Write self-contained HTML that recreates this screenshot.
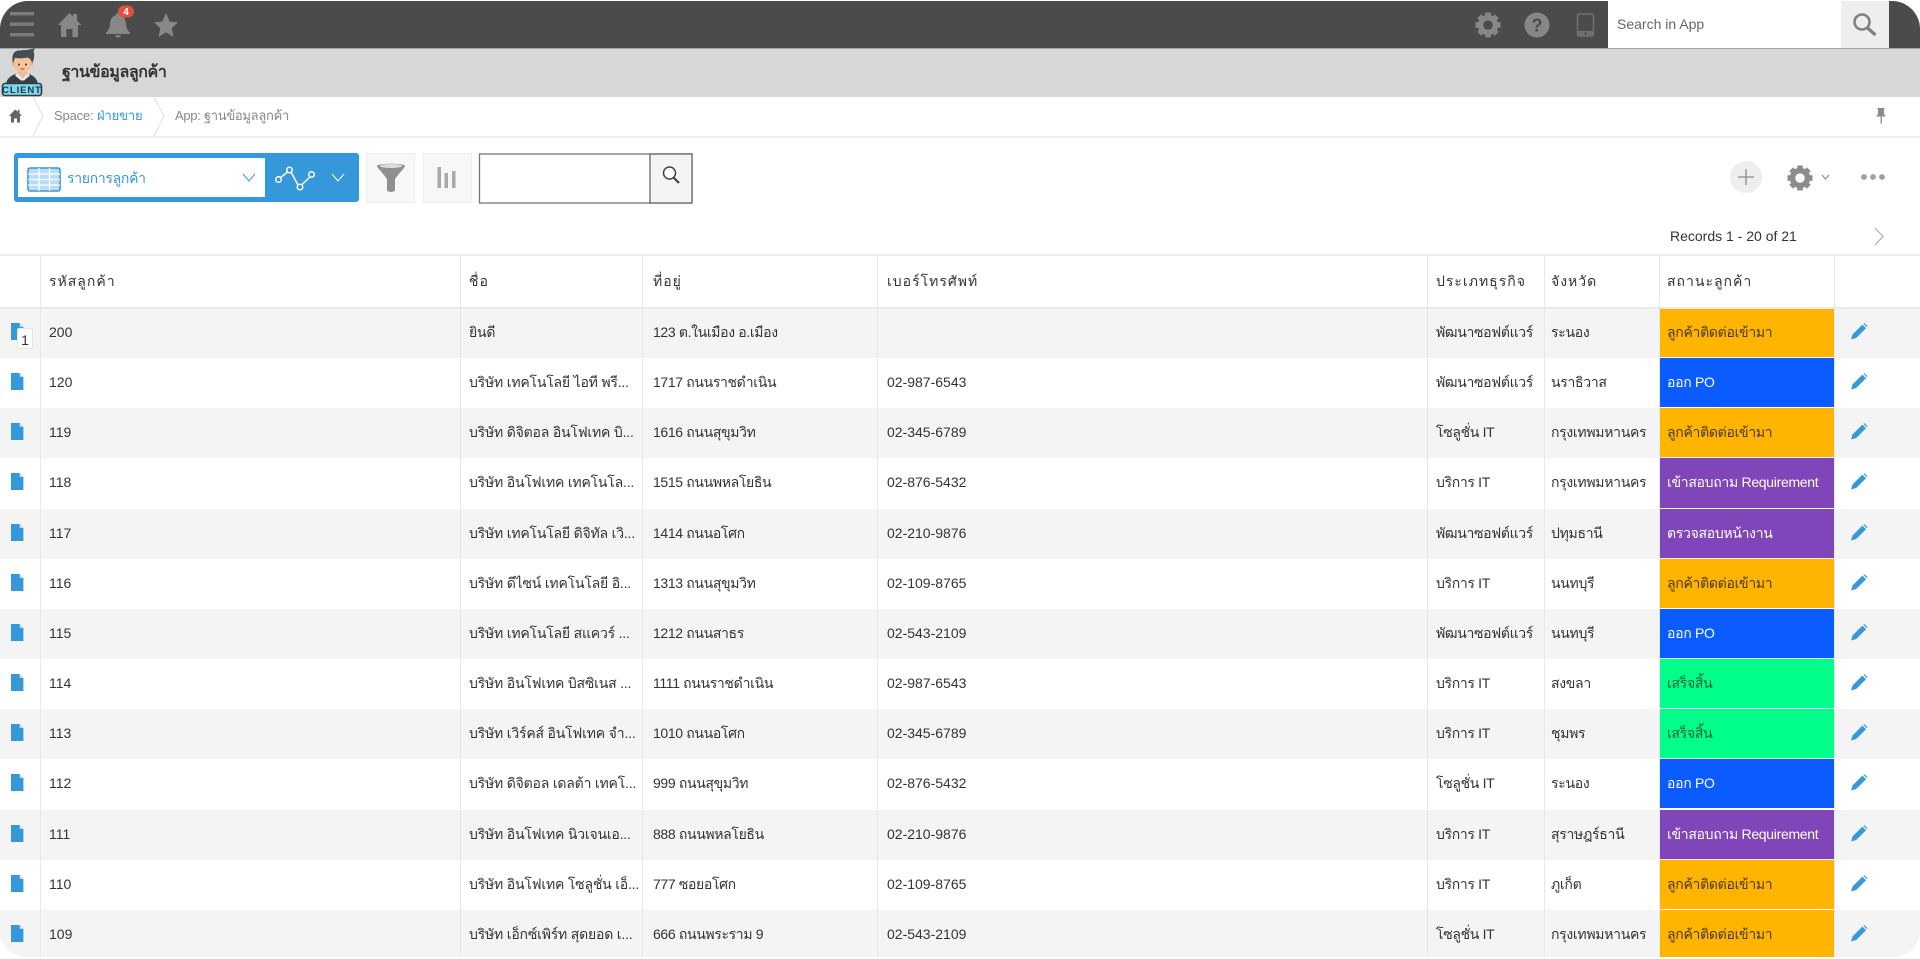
<!DOCTYPE html>
<html lang="th"><head><meta charset="utf-8"><title>ฐานข้อมูลลูกค้า</title>
<style>
*{box-sizing:border-box}
html,body{margin:0;padding:0;background:#fff}
body{width:1920px;height:959px;overflow:hidden;position:relative;font-family:"Liberation Sans","Noto Sans CJK SC",sans-serif;color:#333;font-size:14px}
.abs{position:absolute}
#frame{position:absolute;left:0;top:1px;width:1920px;height:956px;border-radius:28px 28px 26px 26px;overflow:hidden;background:#fff}
#bar{position:absolute;left:0;top:0;width:1920px;height:47px;background:#4b4b4b}
#band{position:absolute;left:0;top:47px;width:1920px;height:49px;background:#d5d7d8;border-top:1px solid #a5a7a7}
#crumb{position:absolute;left:0;top:96px;width:1920px;height:41px;background:#fff;border-bottom:2px solid #eff0f0}
.t{position:absolute;white-space:nowrap}
.vl{position:absolute;top:253px;bottom:0;width:1px;background:#e6e9e9;z-index:2}
.ln{position:absolute;left:0;width:1920px;height:2px;background:#e9ecec;z-index:2}
.h{position:absolute;top:269px;font-size:14px;letter-spacing:1px;color:#333;line-height:22px;white-space:nowrap;z-index:2}
.r{position:absolute;left:0;width:1920px;height:50.15px}
.g{background:#f4f4f4}
.r span{position:absolute;top:13px;line-height:22px;white-space:nowrap;color:#333}
.a{left:49px}.b{left:469px;letter-spacing:-.2px}.c{left:653px;letter-spacing:-.35px}.d{left:887px}.e{left:1436px;letter-spacing:-.33px}.f{left:1551px;letter-spacing:-.3px}
.r i{position:absolute;left:1659px;width:175px;top:0;bottom:1px;font-style:normal;line-height:48px;padding-left:8px;font-size:14px;white-space:nowrap;letter-spacing:-.3px}
.o{background:#ffb400;color:#4a3a10}.bl{background:#0a5cff;color:#fff}.p{background:#8045b9;color:#fff}.n{background:#00ff8a;color:#17603f}
.r svg{position:absolute}
.doc{left:11px;top:15px}.pen{left:1851px;top:15px}
</style></head><body>
<svg width="0" height="0" style="position:absolute"><defs>
<g id="docI"><path d="M0 0H8.5L12.4 4V17H0Z" fill="#3498db"/><path d="M8.7 .4V3.9H12.2Z" fill="#cfe5f5"/></g>
<g id="penI"><path d="M0 16.500L1.600 11.400L11.400 1.600L15 5.200L5.200 15Z" fill="#3498db"/><path d="M12.400 .8L13.200 0L16.500 3.300L15.800 4.100Z" fill="#3498db"/></g>
</defs></svg>
<div id="frame">
<div id="bar"></div>
<div id="band"></div>
<div id="crumb"></div>
<div class="abs" style="left:1608px;top:0;width:233px;height:47px;background:#fff"></div>
<div class="abs" style="left:1841px;top:0;width:48px;height:47px;background:#eee"></div>
<div id="table" class="abs" style="left:0;top:0;width:1920px;height:956px">
<div class="ln" style="top:252.500px"></div>
<div class="ln" style="top:306px"></div>
<div class="r g" style="top:307px"><svg class="doc" width="13" height="17"><use href="#docI"/></svg><span class="a">200</span><span class="b">ยินดี</span><span class="c">123 ต.ในเมือง อ.เมือง</span><span class="d"></span><span class="e">พัฒนาซอฟต์แวร์</span><span class="f">ระนอง</span><i class="o">ลูกค้าติดต่อเข้ามา</i><svg class="pen" width="17" height="17"><use href="#penI"/></svg>
<b style="position:absolute;left:17px;top:20px;width:16px;height:21px;background:#fff;border:1px solid #e5e5e5;border-radius:2px;font-weight:400;font-size:14px;line-height:22px;text-align:center;color:#333">1</b></div>
<div class="r" style="top:357.15px"><svg class="doc" width="13" height="17"><use href="#docI"/></svg><span class="a">120</span><span class="b">บริษัท เทคโนโลยี ไอที พรี...</span><span class="c">1717 ถนนราชดำเนิน</span><span class="d">02-987-6543</span><span class="e">พัฒนาซอฟต์แวร์</span><span class="f">นราธิวาส</span><i class="bl">ออก PO</i><svg class="pen" width="17" height="17"><use href="#penI"/></svg></div>
<div class="r g" style="top:407.3px"><svg class="doc" width="13" height="17"><use href="#docI"/></svg><span class="a">119</span><span class="b">บริษัท ดิจิตอล อินโฟเทค บิ...</span><span class="c">1616 ถนนสุขุมวิท</span><span class="d">02-345-6789</span><span class="e">โซลูชั่น IT</span><span class="f">กรุงเทพมหานคร</span><i class="o">ลูกค้าติดต่อเข้ามา</i><svg class="pen" width="17" height="17"><use href="#penI"/></svg></div>
<div class="r" style="top:457.45px"><svg class="doc" width="13" height="17"><use href="#docI"/></svg><span class="a">118</span><span class="b">บริษัท อินโฟเทค เทคโนโล...</span><span class="c">1515 ถนนพหลโยธิน</span><span class="d">02-876-5432</span><span class="e">บริการ IT</span><span class="f">กรุงเทพมหานคร</span><i class="p">เข้าสอบถาม Requirement</i><svg class="pen" width="17" height="17"><use href="#penI"/></svg></div>
<div class="r g" style="top:507.6px"><svg class="doc" width="13" height="17"><use href="#docI"/></svg><span class="a">117</span><span class="b">บริษัท เทคโนโลยี ดิจิทัล เวิ...</span><span class="c">1414 ถนนอโศก</span><span class="d">02-210-9876</span><span class="e">พัฒนาซอฟต์แวร์</span><span class="f">ปทุมธานี</span><i class="p">ตรวจสอบหน้างาน</i><svg class="pen" width="17" height="17"><use href="#penI"/></svg></div>
<div class="r" style="top:557.75px"><svg class="doc" width="13" height="17"><use href="#docI"/></svg><span class="a">116</span><span class="b">บริษัท ดีไซน์ เทคโนโลยี อิ...</span><span class="c">1313 ถนนสุขุมวิท</span><span class="d">02-109-8765</span><span class="e">บริการ IT</span><span class="f">นนทบุรี</span><i class="o">ลูกค้าติดต่อเข้ามา</i><svg class="pen" width="17" height="17"><use href="#penI"/></svg></div>
<div class="r g" style="top:607.9px"><svg class="doc" width="13" height="17"><use href="#docI"/></svg><span class="a">115</span><span class="b">บริษัท เทคโนโลยี สแควร์ ...</span><span class="c">1212 ถนนสาธร</span><span class="d">02-543-2109</span><span class="e">พัฒนาซอฟต์แวร์</span><span class="f">นนทบุรี</span><i class="bl">ออก PO</i><svg class="pen" width="17" height="17"><use href="#penI"/></svg></div>
<div class="r" style="top:658.05px"><svg class="doc" width="13" height="17"><use href="#docI"/></svg><span class="a">114</span><span class="b">บริษัท อินโฟเทค บิสซิเนส ...</span><span class="c">1111 ถนนราชดำเนิน</span><span class="d">02-987-6543</span><span class="e">บริการ IT</span><span class="f">สงขลา</span><i class="n">เสร็จสิ้น</i><svg class="pen" width="17" height="17"><use href="#penI"/></svg></div>
<div class="r g" style="top:708.2px"><svg class="doc" width="13" height="17"><use href="#docI"/></svg><span class="a">113</span><span class="b">บริษัท เวิร์คส์ อินโฟเทค จำ...</span><span class="c">1010 ถนนอโศก</span><span class="d">02-345-6789</span><span class="e">บริการ IT</span><span class="f">ชุมพร</span><i class="n">เสร็จสิ้น</i><svg class="pen" width="17" height="17"><use href="#penI"/></svg></div>
<div class="r" style="top:758.35px"><svg class="doc" width="13" height="17"><use href="#docI"/></svg><span class="a">112</span><span class="b">บริษัท ดิจิตอล เดลต้า เทคโ...</span><span class="c">999 ถนนสุขุมวิท</span><span class="d">02-876-5432</span><span class="e">โซลูชั่น IT</span><span class="f">ระนอง</span><i class="bl">ออก PO</i><svg class="pen" width="17" height="17"><use href="#penI"/></svg></div>
<div class="r g" style="top:808.5px"><svg class="doc" width="13" height="17"><use href="#docI"/></svg><span class="a">111</span><span class="b">บริษัท อินโฟเทค นิวเจนเอ...</span><span class="c">888 ถนนพหลโยธิน</span><span class="d">02-210-9876</span><span class="e">บริการ IT</span><span class="f">สุราษฎร์ธานี</span><i class="p">เข้าสอบถาม Requirement</i><svg class="pen" width="17" height="17"><use href="#penI"/></svg></div>
<div class="r" style="top:858.65px"><svg class="doc" width="13" height="17"><use href="#docI"/></svg><span class="a">110</span><span class="b">บริษัท อินโฟเทค โซลูชั่น เอ็...</span><span class="c">777 ซอยอโศก</span><span class="d">02-109-8765</span><span class="e">บริการ IT</span><span class="f">ภูเก็ต</span><i class="o">ลูกค้าติดต่อเข้ามา</i><svg class="pen" width="17" height="17"><use href="#penI"/></svg></div>
<div class="r g" style="top:908.8px"><svg class="doc" width="13" height="17"><use href="#docI"/></svg><span class="a">109</span><span class="b">บริษัท เอ็กซ์เพิร์ท สุดยอด เ...</span><span class="c">666 ถนนพระราม 9</span><span class="d">02-543-2109</span><span class="e">โซลูชั่น IT</span><span class="f">กรุงเทพมหานคร</span><i class="o">ลูกค้าติดต่อเข้ามา</i><svg class="pen" width="17" height="17"><use href="#penI"/></svg></div>
<div class="vl" style="left:40px"></div><div class="vl" style="left:460px"></div><div class="vl" style="left:642px"></div><div class="vl" style="left:877px"></div><div class="vl" style="left:1427px"></div><div class="vl" style="left:1544px"></div><div class="vl" style="left:1659px"></div><div class="vl" style="left:1834px"></div>
<div class="h" style="left:49px">รหัสลูกค้า</div><div class="h" style="left:469px">ชื่อ</div><div class="h" style="left:653px">ที่อยู่</div><div class="h" style="left:887px">เบอร์โทรศัพท์</div><div class="h" style="left:1436px">ประเภทธุรกิจ</div><div class="h" style="left:1551px">จังหวัด</div><div class="h" style="left:1667px">สถานะลูกค้า</div>
</div>
</div>

<!-- global overlay svg, page coordinates -->
<svg class="abs" style="left:0;top:0;z-index:3" width="1920" height="300" fill="none">
<g fill="#7b7b7b"><rect x="10" y="12" width="24" height="3.4"/><rect x="10" y="22.5" width="24" height="3.4"/><rect x="10" y="33" width="24" height="3.4"/></g>
<path d="M58 25L69.500 13L73 16.600V14H77V20.800L81.500 25H78V37H72.500V29H66.500V37H61V25Z" fill="#878787"/>
<path d="M118 13c1.500 0 2.400 1 2.400 2.200 4 1.300 5.400 4.600 5.600 8.600.2 4 1.600 7 4 8.700v1.500h-24v-1.500c2.400-1.700 3.800-4.700 4-8.700.2-4 1.600-7.300 5.600-8.600 0-1.200.9-2.200 2.400-2.200Z" fill="#878787"/><path d="M115 35.300h6c-.4 1.500-1.500 2.200-3 2.200s-2.600-.7-3-2.200Z" fill="#878787"/>
<rect x="118" y="5.500" width="16" height="12" rx="6" fill="#e74c3c"/><text x="126" y="15" font-size="10" font-weight="700" fill="#fff" text-anchor="middle" font-family="Liberation Sans">4</text>
<path d="M166 13L169.700 21.600 178 22.300 171.700 28.200 173.500 37 166 32.400 158.500 37 160.300 28.200 154 22.300 162.300 21.600Z" fill="#878787"/>
<g transform="translate(1488 25)"><circle r="7.500" stroke="#878787" stroke-width="5.500"/><path d="M-2.800-12.500H2.800V-7H-2.800ZM-2.800 12.500H2.800V7H-2.800ZM-12.500-2.800V2.800H-7V-2.800ZM12.500-2.800V2.800H7V-2.800ZM-10.800-6.800L-6.800-10.800-3.500-7-7-3.500ZM10.800 6.800L6.800 10.800 3.500 7 7 3.500ZM6.800-10.800L10.800-6.800 7-3.500 3.500-7ZM-6.800 10.800L-10.800 6.800-7 3.500-3.500 7Z" fill="#878787"/></g>
<circle cx="1537" cy="25" r="12.500" fill="#878787"/><text x="1537" y="31.500" font-size="18" font-weight="700" fill="#4b4b4b" text-anchor="middle" font-family="Liberation Sans">?</text>
<rect x="1577.500" y="14" width="16" height="22" rx="2" stroke="#6f6f6f" stroke-width="1.500"/><rect x="1577" y="31" width="17" height="5" rx="1.500" fill="#6f6f6f"/><circle cx="1585.500" cy="33.500" r="1.100" fill="#3f3f3f"/>
<circle cx="1862" cy="22" r="7.500" stroke="#808080" stroke-width="2.600"/><path d="M1867.500 28L1875.500 35" stroke="#808080" stroke-width="3.200"/>
<path d="M33 97L43 116L33 136M154 97L164 116L154 136" stroke="#dcdede" stroke-width="1"/>
<path d="M15 109.500L9 116H11V122.500H14V118.500H17V122.500H20V116H22L19.500 113.300V110H17.800V111.600Z" fill="#666"/>
<path d="M1877 108H1885L1884 109.500V114L1886 116.500H1882V123.500H1880.600V116.500H1876L1878 114V109.500Z" fill="#8c8c8c"/>
<!-- client icon -->
<g>
<path d="M6 84C7 78 11 75.500 17 73.500H28C33 75.500 37 78 38 84Z" fill="#3a3f46"/>
<path d="M18 70H27V75L22.500 78.500L18 75Z" fill="#efbd93"/>
<path d="M17 73L22.500 78.500L28 73L30 75.500L24 80.500H21L15 75.500Z" fill="#e9ecef"/>
<ellipse cx="22.500" cy="64" rx="9" ry="8.500" fill="#f6c498"/><circle cx="13.500" cy="64" r="2" fill="#f2b887"/><circle cx="31.500" cy="64" r="2" fill="#f2b887"/>
<path d="M13 63.500C11 55 14 50.500 19 50.500C24 50 30 50 35 48L33.500 51.500C35 55 34 60 32 63.500C31.500 60 30 58 27 57.500C23 58.500 18 58.500 15 58Z" fill="#474b52"/>
<circle cx="19" cy="64.500" r="1" fill="#333"/><circle cx="26" cy="64.500" r="1" fill="#333"/><path d="M20.500 69H24.500" stroke="#b5552b" stroke-width="1.100"/>
<rect x="2.500" y="83.500" width="39" height="12" rx="2.500" fill="#7fd8f0" stroke="#2a3e4a" stroke-width="1.600"/>
<text x="22" y="93" font-size="9.500" font-weight="700" fill="#22343e" text-anchor="middle" font-family="Liberation Sans" letter-spacing=".9">CLIENT</text>
</g>
<!-- toolbar -->
<rect x="14" y="153" width="345" height="49" rx="3" fill="#3498db"/>
<rect x="18" y="158" width="247" height="39" fill="#fff"/>
<g>
<rect x="28" y="168" width="32" height="23" rx="2" fill="#bcdcf3" stroke="#3498db" stroke-width="1.600"/>
<path d="M28 174H60M28 179.500H60M28 185H60M39 168V191M49.500 168V191" stroke="#fff" stroke-width="1.300"/>
</g>
<path d="M243 174L249 181L255 174" stroke="#3498db" stroke-width="1"/>
<path d="M332 174L338 181L344 174" stroke="#fff" stroke-width="1"/>
<g stroke="#fff" stroke-width="1.500"><path d="M280 178L287.500 172M291 172L298 185M301.500 185L310 177"/><circle cx="278.500" cy="179.500" r="2.800"/><circle cx="289.500" cy="170" r="2.800"/><circle cx="300" cy="187" r="2.800"/><circle cx="311.500" cy="174.500" r="2.800"/></g>
<rect x="366.500" y="153.500" width="48" height="49" fill="#f7f7f7" stroke="#eee"/>
<path d="M377 166C377 163 405 163 405 166C405 168 395 177 395 180V190C395 192.500 387 192.500 387 190V180C387 177 377 168 377 166Z" fill="#909090"/><ellipse cx="391" cy="166" rx="11" ry="2" fill="#dcdcdc"/>
<rect x="423.500" y="153.500" width="48" height="49" fill="#f7f7f7" stroke="#eee"/>
<path d="M437.500 167H441V188H437.500ZM444.500 173H448V188H444.500ZM452 171H455.500V188H452Z" fill="#a8a8a8"/>
<rect x="479.500" y="154" width="212.500" height="49" fill="#fff" stroke="#777" stroke-width="1.300"/>
<rect x="650" y="154" width="42" height="49" fill="#f4f4f4" stroke="#666" stroke-width="1.300"/>
<circle cx="669.500" cy="173" r="6" fill="#fff" stroke="#444" stroke-width="1.500"/><path d="M673.500 177.500L679 183" stroke="#444" stroke-width="2.200"/>
<circle cx="1746" cy="177" r="16" fill="#eeeeee"/><path d="M1738 177H1754M1746 169V185" stroke="#8a8a8a" stroke-width="1.300"/>
<g transform="translate(1800 178)"><circle r="7.500" stroke="#8c8c8c" stroke-width="5.500"/><path d="M-2.800-12.500H2.800V-7H-2.800ZM-2.800 12.500H2.800V7H-2.800ZM-12.500-2.800V2.800H-7V-2.800ZM12.500-2.800V2.800H7V-2.800ZM-10.800-6.800L-6.800-10.800-3.500-7-7-3.500ZM10.800 6.800L6.800 10.800 3.500 7 7 3.500ZM6.800-10.800L10.800-6.800 7-3.500 3.500-7ZM-6.800 10.800L-10.800 6.800-7 3.500-3.500 7Z" fill="#8c8c8c"/></g>
<path d="M1822 175L1825.500 179L1829 175" stroke="#888" stroke-width="1.100"/>
<g fill="#a0a0a0"><circle cx="1864" cy="177" r="2.900"/><circle cx="1873" cy="177" r="2.900"/><circle cx="1882" cy="177" r="2.900"/></g>
<path d="M1875 228L1883 236.500L1875 245" stroke="#a8a8a8" stroke-width="1.100"/>
</svg>
<div class="t" style="left:1617px;top:15px;line-height:18px;font-size:14px;color:#666;z-index:4">Search in App</div>
<div class="t" style="left:62px;top:61px;line-height:24px;font-size:16px;font-weight:700;color:#333;letter-spacing:-.4px;z-index:4">ฐานข้อมูลลูกค้า</div>
<div class="t" style="left:54px;top:106px;line-height:20px;font-size:13px;color:#888;letter-spacing:-.15px;z-index:4">Space: <span style="color:#3498db">ฝ่ายขาย</span></div>
<div class="t" style="left:175px;top:106px;line-height:20px;font-size:13px;color:#888;letter-spacing:-.3px;z-index:4">App: ฐานข้อมูลลูกค้า</div>
<div class="t" style="left:67px;top:167px;line-height:22px;font-size:14px;color:#3498db;letter-spacing:-.3px;z-index:4">รายการลูกค้า</div>
<div class="t" style="left:1670px;top:226px;line-height:20px;font-size:14px;color:#333;z-index:4">Records 1 - 20 of 21</div>
</body></html>
